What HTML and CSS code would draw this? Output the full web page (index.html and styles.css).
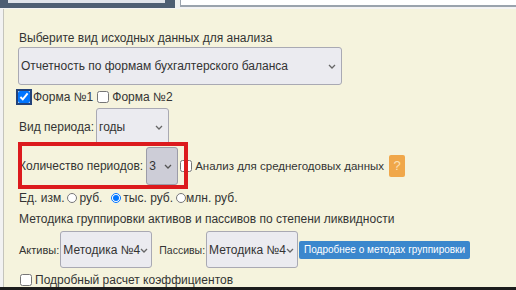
FILE: index.html
```html
<!DOCTYPE html>
<html lang="ru">
<head>
  <meta charset="UTF-8" />
  <title>Анализ баланса</title>
  <link rel="stylesheet" href="styles.css">
</head>
<body>

  <div class="topbar">
    <div class="tab-dark"><div class="tab-inner"></div></div>
    <div class="tab-gap"></div>
    <div class="tab-field"></div>
  </div>

  <div class="panel">
    <p class="caption">Выберите вид исходных данных для анализа</p>

    <div class="sel sel-source">
      <select><option>Отчетность по формам бухгалтерского баланса</option></select>
      <svg class="chev" width="8" height="5" viewBox="0 0 8 5"><path d="M1 1l3 3 3-3" fill="none" stroke="#666" stroke-width="1.3"/></svg>
    </div>

    <div class="row line forms">
      <label><input type="checkbox" class="focus" checked>Форма №1</label>
      <label><input type="checkbox">Форма №2</label>
    </div>

    <div class="row field-row period-row">
      <span class="lbl">Вид периода:</span>
      <div class="sel sel-period">
        <select><option>годы</option></select>
        <svg class="chev" width="8" height="5" viewBox="0 0 8 5"><path d="M1 1l3 3 3-3" fill="none" stroke="#666" stroke-width="1.3"/></svg>
      </div>
    </div>

    <div class="row field-row count-row">
      <span class="lbl">Количество периодов:</span>
      <div class="sel sel-count">
        <select><option>3</option></select>
        <svg class="chev" width="8" height="5" viewBox="0 0 8 5"><path d="M1 1l3 3 3-3" fill="none" stroke="#555" stroke-width="1.3"/></svg>
      </div>
      <label class="avg"><input type="checkbox">Анализ для среднегодовых данных</label>
      <span class="help">?</span>
      <span class="mark"></span>
    </div>

    <div class="row line units">
      <span class="lbl">Ед. изм.</span>
      <label><input type="radio" name="unit">руб.</label>
      <label class="ths"><input type="radio" name="unit" checked>тыс. руб.</label>
      <label class="mln"><input type="radio" name="unit">млн. руб.</label>
    </div>

    <p class="caption method">Методика группировки активов и пассивов по степени ликвидности</p>

    <div class="row field-row assets-row">
      <span class="lbl">Активы:</span>
      <div class="sel sel-method">
        <select><option>Методика №4</option></select>
        <svg class="chev" width="8" height="5" viewBox="0 0 8 5"><path d="M1 1l3 3 3-3" fill="none" stroke="#666" stroke-width="1.3"/></svg>
      </div>
      <span class="lbl passive">Пассивы:</span>
      <div class="sel sel-method">
        <select><option>Методика №4</option></select>
        <svg class="chev" width="8" height="5" viewBox="0 0 8 5"><path d="M1 1l3 3 3-3" fill="none" stroke="#666" stroke-width="1.3"/></svg>
      </div>
      <button class="btn">Подробнее о методах группировки</button>
    </div>

    <div class="row line detail">
      <label><input type="checkbox">Подробный расчет коэффициентов</label>
    </div>
  </div>

  <div class="bottom-bar"></div>

</body>
</html>
```

FILE: styles.css
```css
html, body {
  margin: 0;
  padding: 0;
  height: 290px;
  overflow: hidden;
}
body {
  font-family: "Liberation Sans", Arial, sans-serif;
  font-size: 12px;
  color: #333;
  background: #f2f2f2;
}
.topbar {
  display: flex;
  height: 8px;
  border-bottom: 1px solid #f4f4f4;
}
.tab-dark {
  width: 157px;
  background: #4d5e73;
  padding: 0 10px 0 8px;
}
.tab-inner {
  height: 3px;
  background: #dfe3ea;
}
.tab-gap {
  width: 5px;
  background: #eef0f0;
}
.tab-field {
  flex: 1;
  background: #fff;
  border-left: 1px solid #9aa3ad;
  border-bottom: 2px solid #9aa3ad;
  height: 5px;
}
.panel {
  height: 278px;
  margin-left: 3px;
  border-left: 1px solid #c4c4bc;
  background: #f5f3dd;
  padding: 21px 0 0 14px;
  box-sizing: border-box;
  overflow: hidden;
}
.caption {
  margin: 0;
  line-height: 16px;
  padding-left: 1px;
}
.row {
  display: flex;
  align-items: center;
}
.line {
  height: 16px;
  line-height: 16px;
}
.lbl {
  padding-left: 1px;
}
label {
  display: flex;
  align-items: center;
}
input[type=checkbox] {
  width: 12px;
  height: 12px;
  margin: 0 3px 0 0;
}
input[type=radio] {
  width: 10px;
  height: 10px;
  margin: 0 2px 0 3px;
}
.focus {
  outline: 2px solid #23427a;
  outline-offset: 0;
  border-radius: 2px;
}

.sel {
  position: relative;
  display: flex;
  width: fit-content;
}
.sel select {
  appearance: none;
  -webkit-appearance: none;
  font-family: "Liberation Sans", Arial, sans-serif;
  font-size: 12px;
  color: #333;
  background: #ebebf0;
  border: 1px solid #a9a9b3;
  border-radius: 3px;
  height: 38px;
  padding: 0 0 0 2px;
  margin: 0;
  box-sizing: border-box;
}
.chev {
  position: absolute;
  top: 17px;
  right: 6px;
  pointer-events: none;
}

.sel-source {
  margin-top: 1px;
}
.sel-source select {
  width: 324px;
}
.forms {
  margin-top: 4px;
}
.forms label + label {
  margin-left: 4px;
}
.period-row {
  margin-top: 3px;
}
.period-row .lbl {
  margin-right: 2px;
}
.sel-period select {
  width: 73px;
}
.count-row {
  margin-top: 1px;
  position: relative;
}
.count-row .lbl {
  margin-right: 3px;
}
.sel-count select {
  width: 32px;
  background: #cdcdd7;
  border-color: #9c9ca8;
}
.avg {
  margin-left: 2px;
  font-size: 11.5px;
}
.help {
  display: inline-block;
  width: 16px;
  height: 22px;
  line-height: 22px;
  margin-left: 5px;
  background: #f0a74a;
  border-radius: 2px;
  color: #fbe2b8;
  text-align: center;
  font-size: 13px;
}
.mark {
  position: absolute;
  left: 0;
  top: -5px;
  width: 170px;
  height: 47px;
  border: 4px solid #dc1a1d;
  box-sizing: border-box;
  pointer-events: none;
}
.units {
  margin-top: 5px;
}
.units .ths {
  margin-left: 6px;
}
.units .mln input {
  margin-right: 0;
}
.method {
  margin-top: 5px;
}
.assets-row {
  margin-top: 4px;
}
.assets-row .lbl {
  margin-right: 1px;
  font-size: 11px;
}
.sel-method select {
  width: 92px;
  height: 37px;
}
.sel-method .chev {
  right: 4px;
}
.assets-row .passive {
  margin-left: 6px;
  font-size: 10.5px;
}
.btn {
  margin-left: 1px;
  height: 18px;
  padding: 0 5px;
  background: #3b87cd;
  color: #fff;
  border: none;
  border-radius: 2px;
  font-family: "Liberation Sans", Arial, sans-serif;
  font-size: 10px;
  cursor: pointer;
}
.detail {
  margin-top: 4px;
}
.detail input {
  margin-left: 2px;
}
.bottom-bar {
  height: 3px;
  background: #1c1c1c;
}
```
